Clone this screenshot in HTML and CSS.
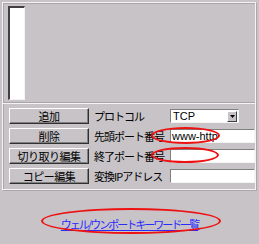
FILE: index.html
```html
<!DOCTYPE html>
<html lang="ja">
<head>
<meta charset="utf-8">
<link rel="stylesheet" href="styles.css">
</head>
<body>
<div class="frame">
  <div class="top">
    <div class="listbox"></div>
  </div>
  <div class="rows">
    <div class="btn">追加</div>
    <div class="label">プロトコル</div>
    <div class="ctl"><div class="select"><span>TCP</span><span class="arrow"><svg width="5" height="3" viewBox="0 0 5 3"><path d="M0 0h5L2.5 3z" fill="#000"/></svg></span></div></div>

    <div class="btn">削除</div>
    <div class="label">先頭ポート番号</div>
    <div class="ctl"><div class="input">www-http</div></div>

    <div class="btn">切り取り編集</div>
    <div class="label">終了ポート番号</div>
    <div class="ctl"><div class="input"></div></div>

    <div class="btn">コピー編集</div>
    <div class="label">変換IPアドレス</div>
    <div class="ctl"><div class="input"></div></div>
  </div>
</div>
<div class="linkrow"><a class="link" href="#">ウェル/ウンポートキーワード一覧</a></div>
<div class="ring ring1"></div>
<div class="ring ring2"></div>
<div class="ring ring3"></div>
</body>
</html>
```
FILE: styles.css
```css
html, body {
  margin: 0;
  padding: 0;
}
body {
  width: 259px;
  height: 244px;
  background: #c7c3c7;
  font-family: "Noto Sans CJK JP", "Noto Sans", sans-serif;
  font-size: 11px;
  color: #000;
  position: relative;
  overflow: hidden;
}
.frame {
  margin: 2px 0 0 2px;
  width: 252px;
  height: 186px;
  border: 1px solid #f4f4f4;
  box-shadow: inset 1px 1px 0 #aaa6aa, 1px 1px 0 #aaa6aa;
  display: flex;
  flex-direction: column;
}
.top {
  height: 96px;
  padding: 3px 0 0 5px;
  border-bottom: 1px solid #a8a4a8;
}
.listbox {
  width: 14px;
  height: 91px;
  background: #fff;
  border-style: solid;
  border-width: 2px 1px 1px 2px;
  border-color: #404040 #f4f4f4 #f4f4f4 #404040;
}
.rows {
  border-top: 1px solid #f4f4f4;
  padding: 2px 0 0 6px;
  display: grid;
  grid-template-columns: 80px 74px 86px;
  grid-auto-rows: 20px;
  column-gap: 4px;
  align-items: center;
}
.btn {
  height: 14px;
  line-height: 14px;
  text-align: center;
  border: 1px solid;
  border-color: #fff #303030 #303030 #fff;
  box-shadow: inset -1px -1px 0 #808080;
  letter-spacing: -0.5px;
}
.label {
  white-space: nowrap;
  letter-spacing: -1px;
  padding-left: 1px;
}
.ctl {
  height: 14px;
  margin-left: -1px;
}
.select {
  width: 65px;
  height: 12px;
  background: #fff;
  border: 1px solid;
  border-color: #808080 #f4f4f4 #f4f4f4 #808080;
  display: flex;
  align-items: center;
  justify-content: space-between;
  font-family: "Liberation Sans", sans-serif;
  font-size: 11px;
  padding-left: 2px;
}
.arrow {
  width: 8px;
  height: 9px;
  margin-right: 1px;
  background: #c7c3c7;
  border: 1px solid;
  border-color: #fff #404040 #404040 #fff;
  display: flex;
  align-items: center;
  justify-content: center;
}
.input {
  width: 82px;
  height: 12px;
  line-height: 12px;
  background: #fff;
  border: 1px solid;
  border-color: #808080 #f4f4f4 #f4f4f4 #808080;
  font-family: "Liberation Sans", sans-serif;
  font-size: 11px;
  padding-left: 1px;
}
.linkrow {
  margin-top: 26px;
  text-align: center;
}
.link {
  color: #2a2aff;
  letter-spacing: -2px;
  text-decoration: underline;
}
.ring {
  position: absolute;
  border: 2px solid #ee1111;
  border-radius: 50%;
  box-sizing: border-box;
}
.ring1 { left: 151px; top: 127px; width: 69px; height: 17px; }
.ring2 { left: 151px; top: 147px; width: 68px; height: 16px; }
.ring3 { left: 41px; top: 208px; width: 180px; height: 26px; }
```
